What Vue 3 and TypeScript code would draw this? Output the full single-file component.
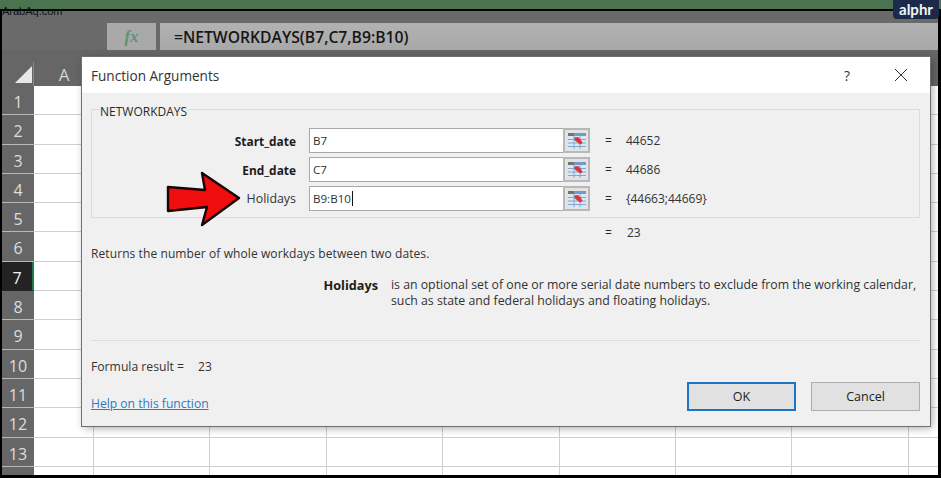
<script setup lang="ts">
const rowNumbers: number[] = [1, 2, 3, 4, 5, 6, 7, 8, 9, 10, 11, 12, 13, 14]
const columns: number[] = [0, 1, 2, 3, 4, 5, 6, 7, 8]
interface Arg { name: string; value: string; result: string; bold: boolean; caret: boolean }
const args: Arg[] = [
  { name: 'Start_date', value: 'B7', result: '44652', bold: true, caret: false },
  { name: 'End_date', value: 'C7', result: '44686', bold: true, caret: false },
  { name: 'Holidays', value: 'B9:B10', result: '{44663;44669}', bold: false, caret: true },
]
</script>

<template>
  <div class="page">
    <div class="band"></div>
    <div class="frame">
      <div class="formula-zone">
        <div class="fx-cell"><span class="fx">fx</span></div>
        <div class="formula">=NETWORKDAYS(B7,C7,B9:B10)</div>
      </div>
      <div class="col-head">
        <div class="corner"><span class="tri"></span></div>
        <div class="col-a">A</div>
      </div>
      <div class="rows">
        <div v-for="n in rowNumbers" :key="n" class="row">
          <div class="row-num" :class="{ active: n === 7 }">{{ n < 14 ? n : '' }}</div>
          <div class="cell first"></div>
          <div v-for="c in columns" :key="c" class="cell"></div>
        </div>
      </div>
    </div>

    <div class="watermark">ArabAq.com</div>
    <div class="badge">alphr</div>

    <section class="dialog">
      <header class="title-bar">
        <span class="title">Function Arguments</span>
        <span class="help-q">?</span>
        <svg class="close" width="14" height="14" viewBox="0 0 14 14">
          <path d="M1 1 L13 13 M13 1 L1 13" stroke="#333" stroke-width="1" fill="none" />
        </svg>
      </header>
      <div class="body">
        <fieldset class="group">
          <legend>NETWORKDAYS</legend>
          <div v-for="a in args" :key="a.name" class="arg-row">
            <label class="arg-label" :class="{ strong: a.bold }">{{ a.name }}</label>
            <div class="input">{{ a.value }}<i v-if="a.caret" class="caret"></i></div>
            <button class="ref" type="button" aria-label="Collapse">
              <svg width="18" height="16" viewBox="0 0 18 16">
                <rect x="0" y="0" width="18" height="16" fill="#dbe7f3" />
                <rect x="6" y="0" width="12" height="3" fill="#6f9cc9" />
                <rect x="0" y="0" width="6" height="3" fill="#6d7a5f" />
                <path d="M0 6.5H18M0 10H18M0 13.5H18M6 3V16M12 3V16" stroke="#7da8d2" stroke-width="1" fill="none" />
                <path d="M6 4.5 L10 4 L13 7 L14.5 10 L12.5 11.5 L9.5 9.5 L7 7.5 Z" fill="#d9353c" />
              </svg>
            </button>
            <span class="eq">=</span>
            <span class="res">{{ a.result }}</span>
          </div>
        </fieldset>

        <div class="total"><span class="eq">=</span><span class="res">23</span></div>
        <p class="summary">Returns the number of whole workdays between two dates.</p>
        <div class="detail">
          <b class="detail-name">Holidays</b>
          <p class="detail-text">is an optional set of one or more serial date numbers to exclude from the working calendar, such as state and federal holidays and floating holidays.</p>
        </div>
        <hr class="rule" />
        <div class="result-line"><span class="result-label">Formula result =</span><span class="result-val">23</span></div>
        <div class="footer">
          <a class="help-link" href="#">Help on this function</a>
          <div class="buttons">
            <button class="btn default" type="button">OK</button>
            <button class="btn" type="button">Cancel</button>
          </div>
        </div>
      </div>
    </section>

    <svg class="arrow" width="78" height="60" viewBox="0 0 78 60">
      <path d="M2 16 L39 19 L36 2 L73 27 L36 54 L41 36 L2 40 Z" fill="#f00d0d" stroke="#1a0505" stroke-width="2.4" stroke-linejoin="round" />
    </svg>
  </div>
</template>

<style>
html, body { margin: 0; background: #000; }
</style>

<style scoped>
.page {
  position: relative;
  width: 941px;
  height: 478px;
  overflow: hidden;
  background: #000;
  font-family: "Open Sans", "Noto Sans", sans-serif;
  color: #222;
}
.band { height: 9px; background: #4b7350; }
.frame {
  height: 466px;
  margin: 0 3px 0 2px;
  border-top: 2px solid #000;
  box-sizing: border-box;
  background: #6a6a6a;
  overflow: hidden;
}
.formula-zone {
  display: flex;
  gap: 4px;
  height: 39px;
  padding: 12px 0 0 105px;
  box-sizing: border-box;
  background: #6a6a6a;
}
.fx-cell {
  width: 49px;
  height: 27px;
  background: #a9a9a9;
  display: flex;
  align-items: center;
  justify-content: center;
}
.fx {
  font: italic 700 17px "Liberation Serif", serif;
  color: #5f9274;
}
.formula {
  flex: 1;
  height: 27px;
  padding-left: 14px;
  font-size: 15.7px;
  font-weight: 600;
  line-height: 28px;
  color: #161616;
  background: linear-gradient(#b2b2b2, #a8a8a8);
}
.col-head {
  display: flex;
  height: 36px;
  background: #666;
}
.corner {
  width: 31px;
  position: relative;
  border-right: 1px solid #8a8a8a;
  margin-top: 12px;
}
.tri {
  position: absolute;
  right: 1px;
  bottom: 3px;
  width: 0;
  height: 0;
  border-left: 17px solid transparent;
  border-bottom: 17px solid #e8e8e8;
}
.col-a {
  width: 60px;
  text-align: center;
  line-height: 50px;
  height: 36px;
  font-size: 17px;
  color: #d4d4d4;
}
.rows { display: flex; flex-direction: column; background: #fff; }
.row {
  display: flex;
  height: 29.3px;
  box-sizing: border-box;
  flex: none;
}
.row-num {
  width: 32px;
  flex: none;
  background: #666;
  border-bottom: 1px solid #b8b8b8;
  box-sizing: border-box;
  text-align: center;
  padding-top: 4px;
  line-height: 24px;
  font-size: 16px;
  color: #ddd;
}
.row-num.active {
  background: #232323;
  color: #f2f2f2;
  border-right: 2px solid #1f7a4b;
  border-bottom-color: #232323;
}
.cell {
  width: 116.4px;
  flex: none;
  box-sizing: border-box;
  background: #fff;
  border-bottom: 1px solid #cfcfcf;
  border-right: 1px solid #cfcfcf;
}
.cell.first { width: 60px; }

.watermark {
  position: absolute;
  left: 2px;
  top: 4px;
  font: 11px "Liberation Sans", sans-serif;
  line-height: 15px;
  color: #0c120e;
}
.badge {
  position: absolute;
  left: 893px;
  top: 0;
  width: 46px;
  height: 19px;
  border-radius: 0 0 4px 4px;
  background: #1b2a4a;
  color: #f3f5f8;
  font: 700 15px/18px Lato, sans-serif;
  text-align: center;
}

.dialog {
  position: absolute;
  left: 82px;
  top: 57px;
  width: 848px;
  height: 369px;
  background: #f0f0f0;
  box-shadow: 0 0 0 1px #6f6f6f, 2px 2px 8px rgba(0, 0, 0, 0.35);
  font-size: 12px;
  color: #2b2b2b;
}
.title-bar {
  height: 36px;
  background: #fff;
  display: flex;
  align-items: center;
  padding: 0 22px 0 9px;
}
.title { flex: 1; font-size: 13.6px; color: #333; }
.help-q { font-size: 14px; margin-right: 44px; color: #333; }
.body { padding: 0 10px 0 9px; }
.group {
  margin: 16px 0 0;
  padding: 8px 0 0;
  height: 109px;
  box-sizing: border-box;
  border: 1px solid #dcdcdc;
  position: relative;
}
.group legend {
  position: absolute;
  left: 8px;
  top: -6px;
  padding: 0;
  font-size: 12px;
  line-height: 16px;
  color: #2b2b2b;
  background: #f0f0f0;
}
.arg-row {
  display: flex;
  align-items: center;
  height: 25px;
  margin: 10px 0 4px;
}
.arg-row + .arg-row { margin-top: 0; }
.arg-label {
  width: 204px;
  text-align: right;
  flex: none;
  color: #333;
  font-size: 12.4px;
}
.arg-label.strong { font-weight: 700; color: #1c1c1c; font-size: 11.9px; }
.input {
  margin-left: 13px;
  width: 254px;
  height: 25px;
  box-sizing: border-box;
  border: 1px solid #a8a8a8;
  border-right: none;
  background: #fff;
  line-height: 23px;
  padding-left: 3px;
  font-size: 11.6px;
  color: #333;
  flex: none;
}
.caret {
  display: inline-block;
  width: 1px;
  height: 15px;
  margin-left: 1px;
  background: #111;
  vertical-align: -3px;
}
.ref {
  width: 27px;
  height: 25px;
  padding: 0;
  border: 2px solid #b8b8b8;
  background: #e3e3e3;
  display: flex;
  align-items: center;
  justify-content: center;
  flex: none;
}
.eq { margin-left: 15px; width: 21px; flex: none; display: inline-block; }
.res { font-size: 12px; color: #333; }
.total {
  height: 16px;
  line-height: 16px;
  margin: 7px 0 0 514px;
  display: flex;
}
.total .eq { margin-left: 0; width: 22px; }
.summary { margin: 5px 0 0; line-height: 16px; color: #333; letter-spacing: 0.09px; }
.detail {
  display: flex;
  margin-top: 15px;
}
.detail-name {
  width: 287px;
  flex: none;
  text-align: right;
  line-height: 16px;
  font-size: 12.7px;
  color: #1c1c1c;
}
.detail-text {
  margin: 0 0 0 13px;
  line-height: 16px;
  font-size: 12.3px;
  color: #333;
}
.rule {
  margin: 31px 0 0;
  border: none;
  border-top: 1px solid #dddddd;
}
.result-line {
  margin-top: 18px;
  line-height: 16px;
  display: flex;
  gap: 14px;
  color: #333;
}
.result-label { font-size: 12.2px; }
.footer {
  display: flex;
  justify-content: space-between;
  align-items: center;
  margin-top: 5px;
  padding-bottom: 0;
}
.help-link { color: #2f78c4; text-decoration: underline; margin-top: 15px; font-size: 12.1px; }
.buttons { display: flex; gap: 15px; }
.btn {
  width: 109px;
  height: 29px;
  box-sizing: border-box;
  border: 1px solid #adadad;
  background: #e1e1e1;
  font: 12.5px "Open Sans", sans-serif;
  color: #222;
  padding: 0;
}
.btn.default { border: 2px solid #1c74c4; }
.arrow {
  position: absolute;
  left: 166px;
  top: 171px;
}
</style>
